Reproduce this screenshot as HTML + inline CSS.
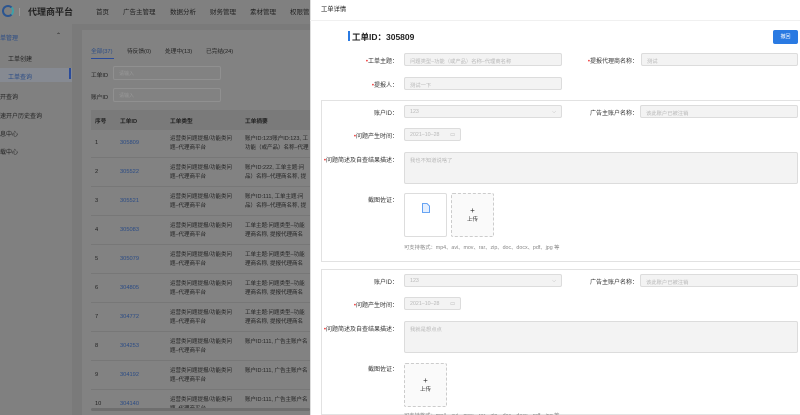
<!DOCTYPE html>
<html><head><meta charset="utf-8"><style>
*{margin:0;padding:0;box-sizing:border-box}
html,body{width:800px;height:415px;overflow:hidden}
body{position:relative;font-family:"Liberation Sans","Noto Sans CJK SC",sans-serif;background:#7a7a7a;font-size:6px;color:#1a1a1a}
.a{position:absolute;white-space:nowrap}
.left{position:absolute;left:0;top:0;width:310px;height:415px;background:#7a7a7a}
.nav{position:absolute;left:0;top:0;width:310px;height:24px;background:#808080}
.side{position:absolute;left:0;top:24px;width:72px;height:391px;background:#808080}
.card{position:absolute;left:82px;top:30px;width:228px;height:385px;background:#828282}
.dt{color:#222}
.lk{color:#2a4b85}
.drawer{position:absolute;left:310px;top:0;width:490px;height:415px;background:#fff;border-left:1px solid #ddd}
.inp{position:absolute;background:#f3f3f3;border:1px solid #dcdcdc;border-radius:2px;color:#b8b8b8;font-size:5.3px;padding:3px 5px;height:13px}
.lb{position:absolute;text-align:right;font-size:6px;color:#333;width:120px}
.req{color:#e33}
.box{position:absolute;left:321px;width:479px;border:1px solid #e2e2e2;border-right:none}
.up{position:absolute;width:43px;height:44px;border:1px solid #ddd;border-radius:2px;text-align:center;font-size:5.5px;color:#333}
.dash{border:1px dashed #ccc;background:#fafafa}
.note{position:absolute;font-size:5.3px;color:#888}
</style></head><body>
<div class="left"></div>
<div class="nav"></div>
<div class="a" style="left:2px;top:5px;width:12px;height:12px;border-radius:50%;border:2.5px solid #2b5590;border-right-color:#3fa0a8"></div>
<div class="a" style="left:19px;top:8px;width:1px;height:8px;background:#999"></div>
<div class="a dt" style="left:28px;top:5px;font-size:9px;font-weight:bold">代理商平台</div>
<div class="a dt" style="left:96px;top:6px;font-size:6.5px">首页</div>
<div class="a dt" style="left:123px;top:6px;font-size:6.5px">广告主管理</div>
<div class="a dt" style="left:170px;top:6px;font-size:6.5px">数据分析</div>
<div class="a dt" style="left:210px;top:6px;font-size:6.5px">财务管理</div>
<div class="a dt" style="left:250px;top:6px;font-size:6.5px">素材管理</div>
<div class="a dt" style="left:290px;top:6px;font-size:6.5px">权限管</div>
<div class="side"></div>
<div class="a lk" style="left:0;top:33px;font-size:6px">单管理</div>
<div class="a dt" style="left:56px;top:32px;font-size:6px">⌃</div>
<div class="a dt" style="left:8px;top:54px;font-size:6px">工单创建</div>
<div class="a" style="left:0;top:68px;width:72px;height:14px;background:#868a92"></div>
<div class="a lk" style="left:8px;top:72px;font-size:6px">工单查询</div>
<div class="a" style="left:69px;top:68px;width:2px;height:11px;background:#2a4b9a"></div>
<div class="a dt" style="left:0;top:92px;font-size:6px">开查询</div>
<div class="a dt" style="left:0;top:111px;font-size:6px">速开户历史查询</div>
<div class="a dt" style="left:0;top:129px;font-size:6px">息中心</div>
<div class="a dt" style="left:0;top:147px;font-size:6px">载中心</div>
<div class="card"></div>
<div class="a lk" style="left:91px;top:46px;font-size:5.7px">全部(37)</div>
<div class="a" style="left:91px;top:58px;width:23px;height:1px;background:#2a4b9a"></div>
<div class="a dt" style="left:127px;top:46px;font-size:5.7px">待反馈(0)</div>
<div class="a dt" style="left:165px;top:46px;font-size:5.7px">处理中(13)</div>
<div class="a dt" style="left:206px;top:46px;font-size:5.7px">已完结(24)</div>
<div class="a dt" style="left:91px;top:70px;font-size:5.7px">工单ID</div>
<div class="a" style="left:113px;top:66px;width:108px;height:14px;border:1px solid #909090;border-radius:2px;background:#828282;color:#999;font-size:5px;padding:3px 5px">请输入</div>
<div class="a dt" style="left:91px;top:92px;font-size:5.7px">账户ID</div>
<div class="a" style="left:113px;top:88px;width:108px;height:14px;border:1px solid #909090;border-radius:2px;background:#828282;color:#999;font-size:5px;padding:3px 5px">请输入</div>
<div class="a" style="left:91px;top:110px;width:219px;height:20px;background:#7a7a7a"></div>
<div class="a dt" style="left:95px;top:116px;font-size:5.7px;font-weight:bold">序号</div>
<div class="a dt" style="left:120px;top:116px;font-size:5.7px;font-weight:bold">工单ID</div>
<div class="a dt" style="left:170px;top:116px;font-size:5.7px;font-weight:bold">工单类型</div>
<div class="a dt" style="left:245px;top:116px;font-size:5.7px;font-weight:bold">工单摘要</div>
<div id="rows"></div>
<div class="a" style="left:91px;top:408px;width:219px;height:3px;background:#6e6e6e;border-radius:2px"></div>
<script>
var ids=["305809","305522","305521","305083","305079","304805","304772","304253","304192","304140"];
var s=["账户ID:123账户ID:123, 工<br>功能（或产品）名称–代理","账户ID:222, 工单主题:问<br>品）名称–代理商名称, 提","账户ID:111, 工单主题:问<br>品）名称–代理商名称, 提","工单主题:问题类型–功能<br>理商名称, 提报代理商名","工单主题:问题类型–功能<br>理商名称, 提报代理商名","工单主题:问题类型–功能<br>理商名称, 提报代理商名","工单主题:问题类型–功能<br>理商名称, 提报代理商名","账户ID:111, 广告主账户名","账户ID:111, 广告主账户名","账户ID:111, 广告主账户名"];
var h="";
for(var i=0;i<10;i++){var y=140+i*29;
h+='<div class="a dt" style="left:95px;top:'+y+'px;font-size:5.7px">'+(i+1)+'</div>';
h+='<div class="a lk" style="left:120px;top:'+y+'px;font-size:5.7px">'+ids[i]+'</div>';
h+='<div class="a dt" style="left:170px;top:'+(y-5)+'px;font-size:5.5px;line-height:9px">运营类问题提报/功能类问<br>题–代理商平台</div>';
h+='<div class="a dt" style="left:245px;top:'+(y-5)+'px;font-size:5.5px;line-height:9px">'+s[i]+'</div>';
if(i<9)h+='<div class="a" style="left:91px;top:'+(y+17)+'px;width:219px;height:1px;background:#777"></div>';}
document.getElementById("rows").innerHTML=h;
</script>
<div class="drawer"></div>
<div class="a" style="left:321px;top:4px;font-size:6.3px;color:#222">工单详情</div>
<div class="a" style="left:310px;top:20px;width:490px;height:1px;background:#f0f0f0"></div>
<div class="a" style="left:348px;top:31px;width:1.5px;height:10px;background:#2a7ae2"></div>
<div class="a" style="left:352px;top:31px;font-size:8.5px;font-weight:bold;color:#222">工单ID：305809</div>
<div class="a" style="left:773px;top:30px;width:25px;height:14px;background:#2a7ae2;border-radius:2px;color:#fff;font-size:5px;text-align:center;line-height:14px">撤回</div>
<div class="lb" style="left:278px;top:56px"><span class="req">•</span>工单主题：</div>
<div class="inp" style="left:404px;top:53px;width:158px">问题类型–功能（或产品）名称–代理商名称</div>
<div class="lb" style="left:518px;top:56px"><span class="req">•</span>提报代理商名称：</div>
<div class="inp" style="left:641px;top:53px;width:157px">测试</div>
<div class="lb" style="left:278px;top:80px"><span class="req">•</span>提报人：</div>
<div class="inp" style="left:404px;top:77px;width:158px">测试一下</div>
<div class="box" style="top:100px;height:162px"></div>
<div class="box" style="top:269px;height:146px"></div>
<script>
function sec(o,txt){var H='';
H+='<div class="lb" style="left:278px;top:'+(o+8)+'px">账户ID：</div>';
H+='<div class="inp" style="left:404px;top:'+(o+5)+'px;width:158px">123<span style="float:right">⌵</span></div>';
H+='<div class="lb" style="left:518px;top:'+(o+8)+'px">广告主账户名称：</div>';
H+='<div class="inp" style="left:640px;top:'+(o+5)+'px;width:158px">该此账户已被注销</div>';
H+='<div class="lb" style="left:278px;top:'+(o+31)+'px"><span class="req">•</span>问题产生时间：</div>';
H+='<div class="inp" style="left:404px;top:'+(o+28)+'px;width:57px">2021–10–28 <span style="float:right">▭</span></div>';
H+='<div class="lb" style="left:278px;top:'+(o+55)+'px"><span class="req">•</span>问题简述及自查结果描述：</div>';
H+='<div class="inp" style="left:404px;top:'+(o+52)+'px;width:394px;height:32px">'+txt+'</div>';
H+='<div class="lb" style="left:278px;top:'+(o+95)+'px">截图佐证：</div>';
return H;}
var D=sec(100,"我也不知道说啥了")+sec(269,"我就是想点点");
D+='<div class="up" style="left:404px;top:193px"><svg width="8" height="10" style="margin-top:9px" viewBox="0 0 8 10"><path d="M0.5 0.5h4.5l2.5 2.5v6.5h-7z" fill="#e4efff" stroke="#3d8af0" stroke-width="0.8"/></svg></div>';
D+='<div class="up dash" style="left:451px;top:193px;padding-top:13px;line-height:8px"><span style="font-size:8px">+</span><br>上传</div>';
D+='<div class="note" style="left:404px;top:243px">可支持格式：mp4、avi、mov、rar、zip、doc、docx、pdf、jpg 等</div>';
D+='<div class="up dash" style="left:404px;top:363px;padding-top:13px;line-height:8px"><span style="font-size:8px">+</span><br>上传</div>';
D+='<div class="note" style="left:404px;top:411px">可支持格式：mp4、avi、mov、rar、zip、doc、docx、pdf、jpg 等</div>';
document.write(D);
</script>
</body></html>
